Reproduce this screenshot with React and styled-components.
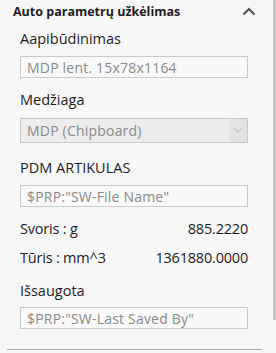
import styled, { createGlobalStyle } from 'styled-components'

const Global = createGlobalStyle`
  html, body {
    margin: 0;
    padding: 0;
    background: #f7f7f7;
  }
  body {
    font-family: 'Open Sans', 'Noto Sans', sans-serif;
    color: #1e1e1e;
  }
`

const Frame = styled.div`
  display: flex;
  height: 353px;
  width: 276px;
  overflow: hidden;
`

const Panel = styled.div`
  flex: 1;
  display: flex;
  flex-direction: column;
  padding: 0 0 0 7px;
`

const Scroll = styled.div`
  width: 3px;
  height: 320px;
  background: #c6c6c6;
`

const Header = styled.div`
  display: flex;
  align-items: center;
  justify-content: space-between;
  height: 23px;
  padding: 0 17px 0 6px;
  font-size: 12.5px;
  font-weight: 700;
`

const Body = styled.div`
  display: flex;
  flex-direction: column;
  padding: 6px 25px 0 13px;
`

const Label = styled.div`
  font-size: 14.5px;
  line-height: 20px;
  margin-bottom: ${p => p.gap || 6}px;
`

const Field = styled.div`
  box-sizing: border-box;
  height: ${p => p.h || 22}px;
  border: 1px solid #c9c9c9;
  background: ${p => (p.disabled ? '#ececec' : '#f9f9f9')};
  display: flex;
  align-items: center;
  padding-left: 6px;
  font-size: 14px;
  color: #8a8a8a;
  letter-spacing: 0.2px;
  margin-bottom: ${p => p.gap || 8}px;
`

const FieldText = styled.span`
  flex: 1;
  white-space: nowrap;
`

const Arrow = styled.div`
  width: 18px;
  align-self: stretch;
  background: #e3e3e3;
  display: flex;
  align-items: center;
  justify-content: center;
`

const Row = styled.div`
  display: flex;
  justify-content: space-between;
  font-size: 14.5px;
  line-height: 20px;
  letter-spacing: -0.2px;
  margin-bottom: ${p => p.gap || 9}px;
`

const Rule = styled.div`
  margin-top: auto;
  margin-bottom: 3px;
  height: 1px;
  width: 255px;
  background: #a9adbb;
`

const Chevron = () => (
  <svg width="14" height="9" viewBox="0 0 14 9">
    <path d="M1.5 7.5 L7 2 L12.5 7.5" fill="none" stroke="#555" strokeWidth="2" />
  </svg>
)

const SmallChevron = () => (
  <svg width="8" height="5" viewBox="0 0 8 5">
    <path d="M0.5 0.5 L4 4 L7.5 0.5" fill="none" stroke="#b0b0b0" strokeWidth="1" />
  </svg>
)

const App = () => (
  <>
    <Global />
    <Frame>
      <Panel>
        <Header>
          <span>Auto parametrų užkėlimas</span>
          <Chevron />
        </Header>
        <Body>
          <Label gap={7}>Aapibūdinimas</Label>
          <Field gap={12}>
            <FieldText>MDP lent. 15x78x1164</FieldText>
          </Field>
          <Label gap={8}>Medžiaga</Label>
          <Field disabled h={25} gap={15}>
            <FieldText>MDP (Chipboard)</FieldText>
            <Arrow>
              <SmallChevron />
            </Arrow>
          </Field>
          <Label gap={7}>PDM ARTIKULAS</Label>
          <Field gap={12}>
            <FieldText>$PRP:"SW-File Name"</FieldText>
          </Field>
          <Row>
            <span>Svoris : g</span>
            <span>885.2220</span>
          </Row>
          <Row gap={13}>
            <span>Tūris : mm^3</span>
            <span>1361880.0000</span>
          </Row>
          <Label gap={6}>Išsaugota</Label>
          <Field>
            <FieldText>$PRP:"SW-Last Saved By"</FieldText>
          </Field>
        </Body>
        <Rule />
      </Panel>
      <Scroll />
    </Frame>
  </>
)

export default App
